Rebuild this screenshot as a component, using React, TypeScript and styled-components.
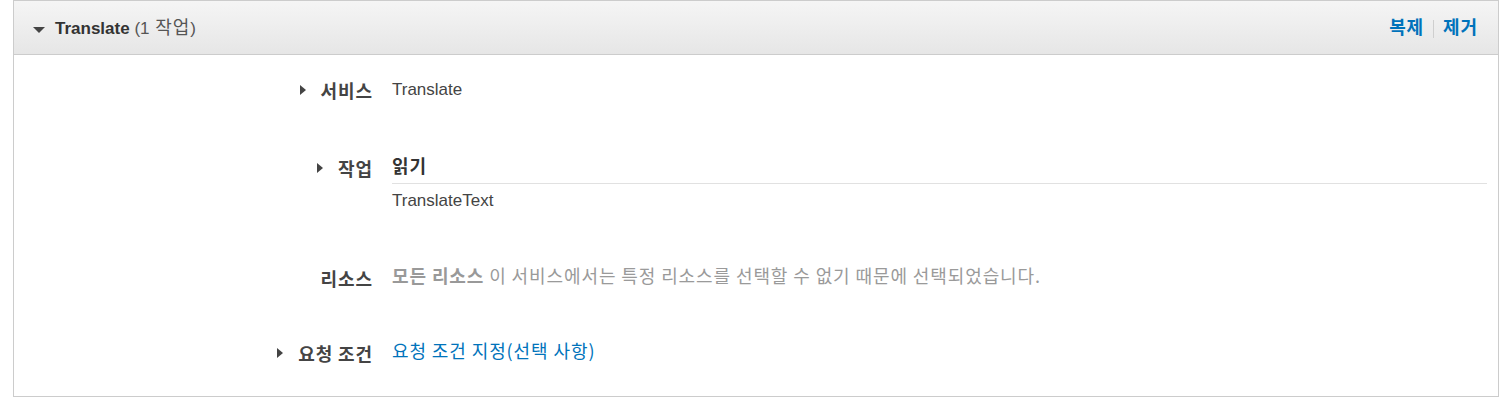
import React from "react";
import styled, { createGlobalStyle } from "styled-components";

const Global = createGlobalStyle`
  html, body { margin: 0; padding: 0; background: #fff; }
  body {
    font-family: "Liberation Sans", "Noto Sans CJK KR", Arial, sans-serif;
    font-size: 17px;
    color: #444;
  }
`;

const Ko = styled.span`
  font-family: "Noto Sans CJK KR", "Liberation Sans", sans-serif;
  font-size: 18px;
  letter-spacing: 0.9px;
  line-height: 16px;
`;

const Page = styled.div`
  padding: 0 7px 8px 13px;
`;

const Panel = styled.section`
  border: 1px solid #cccccc;
  background: #fff;
  height: 397px;
  box-sizing: border-box;
`;

const Header = styled.header`
  display: flex;
  align-items: center;
  justify-content: space-between;
  height: 54px;
  box-sizing: border-box;
  padding: 0 20px 0 19px;
  background: linear-gradient(#f5f5f5, #e6e6e6);
  border-bottom: 1px solid #cccccc;
`;

const Title = styled.div`
  display: flex;
  align-items: center;
  gap: 10px;
  color: #444;
  line-height: 24px;
  padding-top: 2px;
`;

const DownCaret = styled.span`
  width: 0;
  height: 0;
  border-left: 6px solid transparent;
  border-right: 6px solid transparent;
  border-top: 6px solid #444;
  margin-top: 2px;
`;

const TitleStrong = styled.strong`
  font-weight: 700;
  color: #333;
`;

const Count = styled.span`
  color: #555;
  word-spacing: 1px;
`;

const Actions = styled.div`
  display: flex;
  align-items: center;
  gap: 9px;
  padding-top: 2px;
  line-height: 24px;
`;

const HeaderLink = styled.a`
  color: #0073bb;
  font-weight: 700;
  text-decoration: none;
  cursor: pointer;
`;

const Sep = styled.span`
  width: 1px;
  height: 18px;
  background: #cfcfcf;
`;

const Body = styled.div`
  display: flex;
  flex-direction: column;
  padding: 23px 11px 0 0;
`;

const Row = styled.div<{ $mt: number }>`
  display: grid;
  grid-template-columns: 359px 1fr;
  column-gap: 19px;
  margin-top: ${(p) => p.$mt}px;
  line-height: 24px;
`;

const Label = styled.div`
  display: flex;
  align-items: center;
  justify-content: flex-end;
  gap: 15px;
  font-weight: 700;
  color: #444;
  height: 24px;
`;

const RightCaret = styled.span`
  width: 0;
  height: 0;
  border-top: 5px solid transparent;
  border-bottom: 5px solid transparent;
  border-left: 6px solid #444;
`;

const Value = styled.div`
  color: #444;
`;

const ActionGroup = styled.div`
  font-weight: 700;
  color: #333;
  padding-bottom: 3px;
  border-bottom: 1px solid #e1e1e1;
`;

const ActionName = styled.div`
  margin-top: 5px;
  color: #444;
`;

const Muted = styled.div`
  color: #9a9a9a;
`;

const MutedStrong = styled.strong`
  font-weight: 700;
  color: #999;
`;

const Link = styled.a`
  color: #0073bb;
  text-decoration: none;
  cursor: pointer;
`;

export default function App() {
  return (
    <>
      <Global />
      <Page>
        <Panel>
          <Header>
            <Title>
              <DownCaret />
              <span>
                <TitleStrong>Translate</TitleStrong>{" "}
                <Count>
                  (1 <Ko>작업</Ko>)
                </Count>
              </span>
            </Title>
            <Actions>
              <HeaderLink>
                <Ko>복제</Ko>
              </HeaderLink>
              <Sep />
              <HeaderLink>
                <Ko>제거</Ko>
              </HeaderLink>
            </Actions>
          </Header>
          <Body>
            <Row $mt={0}>
              <Label>
                <RightCaret />
                <Ko>서비스</Ko>
              </Label>
              <Value>Translate</Value>
            </Row>
            <Row $mt={54}>
              <Label>
                <RightCaret />
                <Ko>작업</Ko>
              </Label>
              <Value>
                <ActionGroup>
                  <Ko>읽기</Ko>
                </ActionGroup>
                <ActionName>TranslateText</ActionName>
              </Value>
            </Row>
            <Row $mt={53}>
              <Label>
                <Ko>리소스</Ko>
              </Label>
              <Muted>
                <Ko>
                  <MutedStrong>모든 리소스</MutedStrong> 이 서비스에서는 특정 리소스를 선택할 수 없기 때문에 선택되었습니다.
                </Ko>
              </Muted>
            </Row>
            <Row $mt={51}>
              <Label>
                <RightCaret />
                <Ko>요청 조건</Ko>
              </Label>
              <Value>
                <Link>
                  <Ko>요청 조건 지정(선택 사항)</Ko>
                </Link>
              </Value>
            </Row>
          </Body>
        </Panel>
      </Page>
    </>
  );
}
